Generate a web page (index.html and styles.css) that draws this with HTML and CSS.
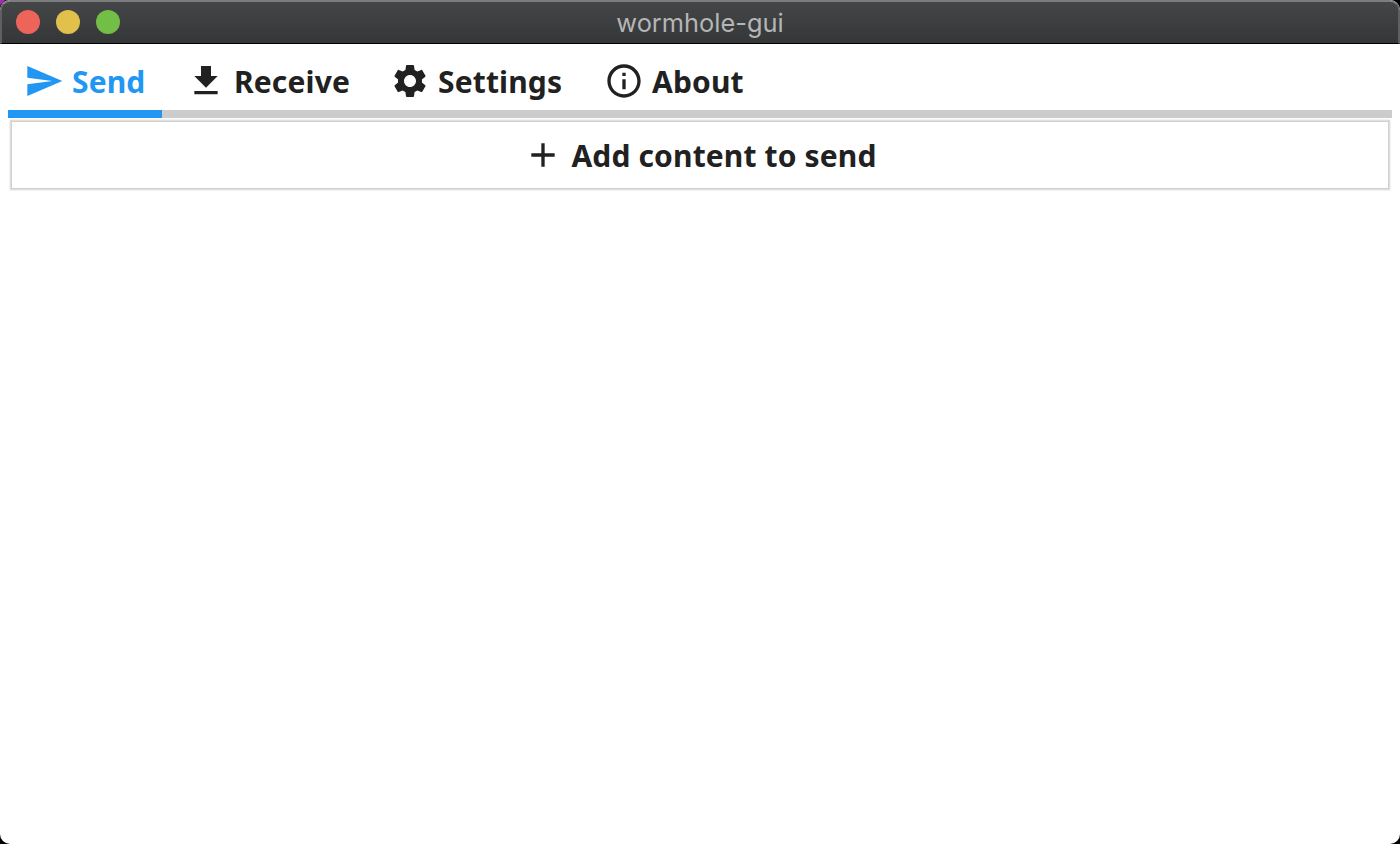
FILE: index.html
```html
<!DOCTYPE html>
<html lang="en">
<head>
<meta charset="utf-8">
<title>wormhole-gui</title>
<link rel="stylesheet" href="styles.css">
</head>
<body>
<div class="window">
  <header class="titlebar">
    <div class="controls">
      <span class="dot close"></span><span class="dot minimize"></span><span class="dot expand"></span>
    </div>
    <span class="title">wormhole-gui</span>
  </header>
  <main class="content">
    <nav class="tabs">
      <a class="tab active"><svg class="icon" viewBox="0 0 24 24"><path d="M2.01 21L23 12 2.01 3 2 10l15 2-15 2z"/></svg><span class="label">Send</span></a>
      <a class="tab receive"><svg class="icon" viewBox="0 0 24 24"><path d="M19 9h-4V3H9v6H5l7 7 7-7zM5 18v2h14v-2H5z"/></svg><span class="label">Receive</span></a>
      <a class="tab settings"><svg class="icon" viewBox="0 0 24 24"><path d="M19.14,12.94c0.04-0.3,0.06-0.61,0.06-0.94c0-0.32-0.02-0.64-0.07-0.94l2.03-1.58c0.18-0.14,0.23-0.41,0.12-0.61l-1.92-3.32c-0.12-0.22-0.37-0.29-0.59-0.22l-2.39,0.96c-0.5-0.38-1.03-0.7-1.62-0.94L14.4,2.81c-0.04-0.24-0.24-0.41-0.48-0.41h-3.84c-0.24,0-0.43,0.17-0.47,0.41L9.25,5.35C8.66,5.59,8.12,5.92,7.63,6.29L5.24,5.33c-0.22-0.08-0.47,0-0.59,0.22L2.74,8.87C2.62,9.08,2.66,9.34,2.86,9.48l2.03,1.58C4.84,11.36,4.8,11.69,4.8,12s0.02,0.64,0.07,0.94l-2.03,1.58c-0.18,0.14-0.23,0.41-0.12,0.61l1.92,3.32c0.12,0.22,0.37,0.29,0.59,0.22l2.39-0.96c0.5,0.38,1.03,0.7,1.62,0.94l0.36,2.54c0.05,0.24,0.24,0.41,0.48,0.41h3.84c0.24,0,0.44-0.17,0.47-0.41l0.36-2.54c0.59-0.24,1.13-0.56,1.62-0.94l2.39,0.96c0.22,0.08,0.47,0,0.59-0.22l1.92-3.32c0.12-0.22,0.07-0.47-0.12-0.61L19.14,12.94z M12,15.6c-1.98,0-3.6-1.62-3.6-3.6s1.62-3.6,3.6-3.6s3.6,1.62,3.6,3.6S13.98,15.6,12,15.6z"/></svg><span class="label">Settings</span></a>
      <a class="tab"><svg class="icon" viewBox="0 0 24 24"><path d="M11 17h2v-6h-2v6zm1-15C6.48 2 2 6.48 2 12s4.48 10 10 10 10-4.480 10-10S17.520 2 12 2zm0 18c-4.410 0-8-3.590-8-8s3.590-8 8-8 8 3.590 8 8-3.590 8-8 8zM11 9h2V7h-2v2z"/></svg><span class="label">About</span></a>
    </nav>
    <button class="add"><svg class="icon" viewBox="0 0 24 24"><path d="M19 13h-6v6h-2v-6H5v-2h6V5h2v6h6v2z"/></svg><span class="label">Add content to send</span></button>
  </main>
</div>
</body>
</html>
```
FILE: styles.css
```css
* { box-sizing: border-box; }
body { margin: 0; background: linear-gradient(135deg, #a52cb0 3px, #000 5px); }
.window {
  display: flex;
  flex-direction: column;
  height: 844px;
  border-radius: 10px;
  overflow: hidden;
  background: #fff;
}
.titlebar {
  display: grid;
  grid-template-columns: 1fr auto 1fr;
  align-items: start;
  height: 44px;
  padding: 0 14px;
  background: linear-gradient(#444648, #353637);
  border: 2px solid #5e6061;
  border-top-color: #7b7d7e;
  border-bottom: 1px solid #000;
  border-radius: 10px 10px 0 0;
}
.controls { display: flex; gap: 16px; padding-top: 8px; }
.dot { width: 24px; height: 24px; border-radius: 50%; }
.close { background: #ed655a; }
.minimize { background: #e1c04c; }
.expand { background: #72be47; }
.title { font: 25.4px/40px Inter, sans-serif; color: #b4b5b6; padding-top: 1px; }
.content { padding: 8px; color: #212121; font: 700 30px/40px "Noto Sans", sans-serif; letter-spacing: 0.14px; }
.tabs { display: flex; gap: 8px; height: 66px; background: linear-gradient(#ccc, #ccc) bottom / 100% 8px no-repeat; }
.tab { display: flex; align-items: center; gap: 8px; padding: 0 16px; border-bottom: 8px solid transparent; }
.active { width: 154px; color: #2196f3; border-color: #2196f3; }
.receive { width: 196px; }
.settings { width: 206px; }
.icon { width: 40px; height: 40px; fill: currentColor; flex: none; }
.label { padding-top: 2px; white-space: nowrap; }
.add {
  display: flex;
  align-items: center;
  justify-content: center;
  gap: 8px;
  width: calc(100% - 8px);
  height: 66px;
  margin: 4px 4px 0;
  padding: 0;
  border: 0;
  background: #fff;
  color: inherit;
  font: inherit;
  letter-spacing: inherit;
  box-shadow: 0 0 0 1px #d0d0d0, 0 0 0 2px #dedede, 0 0 2px 2px #d8d8d8;
}
```
